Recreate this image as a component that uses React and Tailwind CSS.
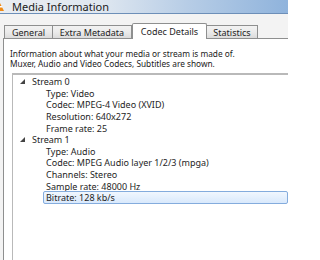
import React from "react";

const rows = [
  { kind: "stream", label: "Stream 0" },
  { kind: "item", label: "Type: Video" },
  { kind: "item", label: "Codec: MPEG-4 Video (XVID)" },
  { kind: "item", label: "Resolution: 640x272" },
  { kind: "item", label: "Frame rate: 25" },
  { kind: "stream", label: "Stream 1" },
  { kind: "item", label: "Type: Audio" },
  { kind: "item", label: "Codec: MPEG Audio layer 1/2/3 (mpga)" },
  { kind: "item", label: "Channels: Stereo" },
  { kind: "item", label: "Sample rate: 48000 Hz" },
  { kind: "item", label: "Bitrate: 128 kb/s", selected: true },
];

const tabs = [
  { label: "General", w: "w-[49px]" },
  { label: "Extra Metadata", w: "w-[80px]" },
  { label: "Codec Details", w: "w-[75px]", active: true },
  { label: "Statistics", w: "w-[52px]" },
];

const Expander = () => (
  <svg width="6" height="6" viewBox="0 0 6 6" className="shrink-0">
    <path d="M5 0 L5 5 L0 5 Z" fill="#444" />
  </svg>
);

const App = () => {
  return (
    <div
      className="w-[320px] h-[260px] bg-white overflow-hidden text-[#1e1e1e]"
      style={{ fontFamily: '"Noto Sans", "Open Sans", sans-serif' }}
    >
      <div className="w-[288px] h-full flex flex-col bg-[#f3f3f3]">
        {/* Title bar */}
        <div className="h-[14px] shrink-0 flex items-center border-b border-[#6d8fb8] bg-[linear-gradient(90deg,#e9edf2_0%,#dfe7f0_35%,#b7cde6_65%,#8fb3dc_100%)]">
          <svg width="6" height="10" viewBox="0 0 6 10" className="shrink-0">
            <path d="M0 1 L4 9 L0 9 Z" fill="#f08a16" />
            <path d="M0 4 L2 4 L2.6 5.5 L0 5.5 Z" fill="#fff" />
          </svg>
          <span className="ml-[6px] text-[11px] leading-none text-[#1b1b1b]">Media Information</span>
        </div>

        {/* Tabs */}
        <div className="h-[24px] shrink-0 flex items-end pl-[4px]">
          {tabs.map((t) =>
            t.active ? (
              <div
                key={t.label}
                className={`${t.w} h-[16px] -mb-px relative z-10 bg-white border border-b-0 border-[#8e8f8f] rounded-t-[2px] flex items-center justify-center text-[9px] leading-none`}
              >
                {t.label}
              </div>
            ) : (
              <div
                key={t.label}
                className={`${t.w} h-[13px] bg-[linear-gradient(180deg,#f2f2f2_0%,#ebebeb_50%,#dcdcdc_100%)] border border-b-0 border-[#8e8f8f] -ml-px first:ml-0 flex items-center justify-center text-[9px] leading-none`}
              >
                {t.label}
              </div>
            )
          )}
        </div>

        {/* Panel */}
        <div className="flex-1 ml-[3px] bg-white border-l border-t border-[#8e8f8f] flex flex-col">
          <div className="pl-[6px] pt-[10px] pb-[5px] text-[8.3px] leading-[9.5px] text-[#222]">
            <p>Information about what your media or stream is made of.</p>
            <p>Muxer, Audio and Video Codecs, Subtitles are shown.</p>
          </div>
          <div className="flex-1 ml-[8px] border-l border-t-2 border-[#b9b9b9] pt-[1px]">
            {rows.map((r, i) =>
              r.kind === "stream" ? (
                <div key={i} className="h-[11.6px] flex items-center pl-[7px] text-[9px] leading-none">
                  <Expander />
                  <span className="ml-[6px]">{r.label}</span>
                </div>
              ) : (
                <div key={i} className="h-[11.6px] flex items-center pl-[33px] text-[9px] leading-none">
                  <span
                    className={
                      r.selected
                        ? "flex-1 h-[13px] -ml-[3px] pl-[2px] flex items-center border border-[#84acdd] rounded-[2px] bg-[linear-gradient(180deg,#f1f7fe_0%,#d9e9fc_100%)]"
                        : ""
                    }
                  >
                    {r.label}
                  </span>
                </div>
              )
            )}
          </div>
        </div>
      </div>
    </div>
  );
};

export default App;
